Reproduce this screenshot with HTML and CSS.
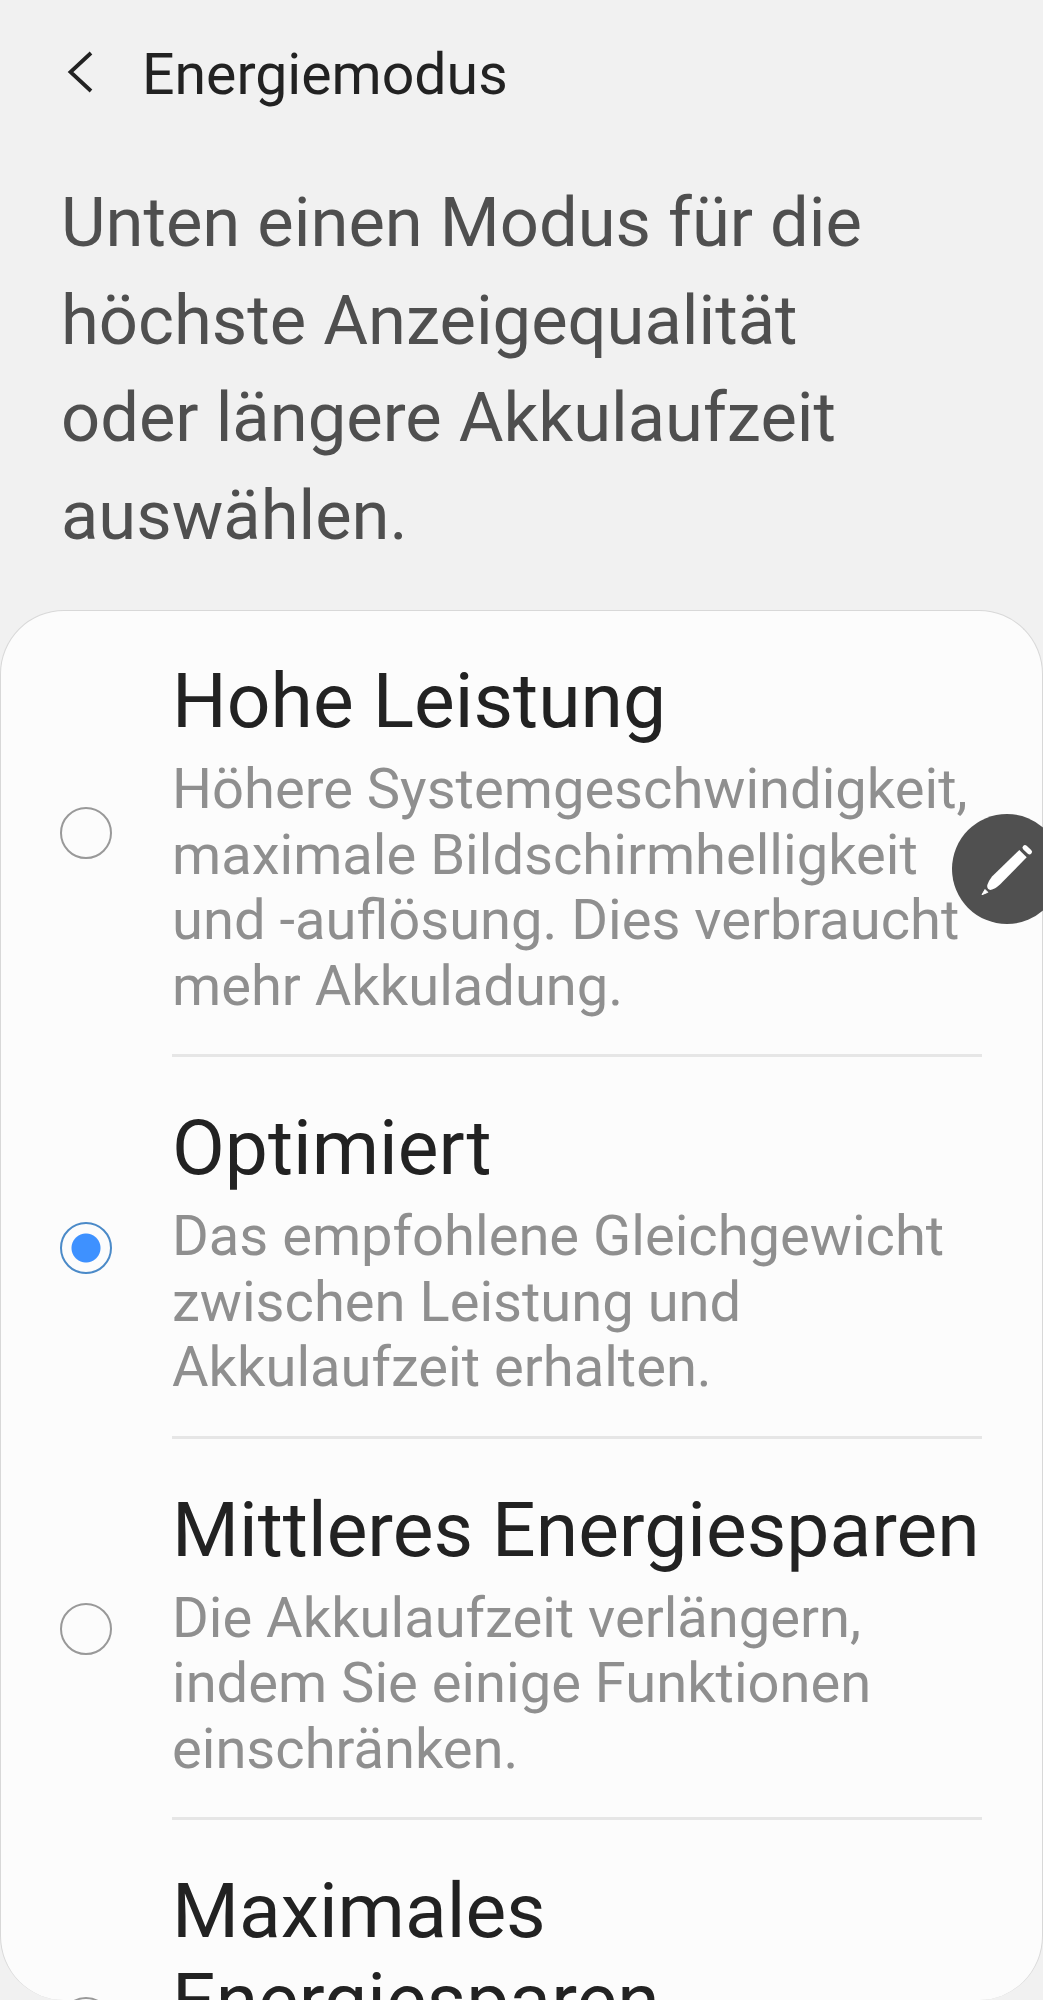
FILE: index.html
```html
<!DOCTYPE html>
<html lang="de">
<head>
<meta charset="utf-8">
<title>Energiemodus</title>
<link rel="stylesheet" href="styles.css">
</head>
<body>
<div class="screen">
  <header class="topbar">
    <svg class="back" width="30" height="44" viewBox="0 0 30 44"><path d="M25 3 4.500 22 25 41" fill="none" stroke="#222" stroke-width="3.8"/></svg>
    <h1 class="title">Energiemodus</h1>
  </header>
  <p class="intro">Unten einen Modus für die<br>höchste Anzeigequalität<br>oder längere Akkulaufzeit<br>auswählen.</p>
  <main class="card">
    <section class="option">
      <span class="radio"></span>
      <div class="body">
        <h2 class="name">Hohe Leistung</h2>
        <p class="desc">Höhere Systemgeschwindigkeit,<br>maximale Bildschirmhelligkeit<br>und -auflösung. Dies verbraucht<br>mehr Akkuladung.</p>
      </div>
    </section>
    <section class="option">
      <span class="radio checked"></span>
      <div class="body">
        <h2 class="name">Optimiert</h2>
        <p class="desc">Das empfohlene Gleichgewicht<br>zwischen Leistung und<br>Akkulaufzeit erhalten.</p>
      </div>
    </section>
    <section class="option">
      <span class="radio"></span>
      <div class="body">
        <h2 class="name">Mittleres Energiesparen</h2>
        <p class="desc">Die Akkulaufzeit verlängern,<br>indem Sie einige Funktionen<br>einschränken.</p>
      </div>
    </section>
    <section class="option last">
      <span class="radio"></span>
      <div class="body">
        <h2 class="name">Maximales<br>Energiesparen</h2>
      </div>
    </section>
  </main>
  <div class="pen">
    <svg width="110" height="110" viewBox="0 0 110 110" fill="#fff">
      <path d="M67.300 36 74.700 43.300 48 70.500Q43 75 38.500 76 34.500 75 35.300 71 36.500 67 40 62.500Z"/>
      <path d="M73 33.700 77.500 37.800" stroke="#fff" stroke-width="5" stroke-linecap="round"/>
      <path d="M33 75.500 35.800 78.300 30 80.700Z" stroke="#fff" stroke-width="1" stroke-linejoin="round"/>
    </svg>
  </div>
</div>
</body>
</html>
```
FILE: styles.css
```css
* { box-sizing: border-box; margin: 0; padding: 0; }
body { background: #f1f1f1; font-family: Roboto, sans-serif; }
.screen { position: relative; width: 1043px; height: 2000px; overflow: hidden; display: flex; flex-direction: column; }
.topbar { height: 174px; flex: none; display: flex; padding: 50px 0 0 66px; }
.title { margin: -10px 0 0 46px; font-size: 57.2px; line-height: 70px; font-weight: 400; color: #222; white-space: nowrap; }
.intro { height: 436px; flex: none; padding-left: 61px; font-size: 68.7px; line-height: 97.7px; color: #4f4f4f; white-space: nowrap; }
.card { flex: 1; min-height: 0; overflow: hidden; background: #fcfcfc; border: 1px solid #d8d8d8; border-bottom: 0; border-radius: 64px; }
.option { display: flex; align-items: center; padding: 0 60px 0 59px; height: 381.5px; }
.option:first-child { height: 446px; }
.option:first-child .radio { margin-bottom: 2px; }
.option:first-child .body { padding-top: 45px; }
.radio { flex: none; width: 52px; height: 52px; border: 2px solid #999; border-radius: 50%; }
.checked { border-color: #4b8ac8; background: radial-gradient(circle, #3e91ff 14px, transparent 15px); }
.body { flex: 1; height: 100%; margin-left: 60px; padding-top: 46px; border-bottom: 3px solid #e6e6e6; white-space: nowrap; }
.name { font-size: 76.8px; line-height: 90px; font-weight: 400; color: #222; }
.desc { font-size: 56.1px; line-height: 65.7px; color: #8f8f8f; margin-top: 11px; }
.last { align-items: flex-start; }
.last .radio { margin-top: 177px; }
.pen { position: absolute; left: 952px; top: 814px; width: 110px; height: 110px; border-radius: 50%; background: #505050; }
```
